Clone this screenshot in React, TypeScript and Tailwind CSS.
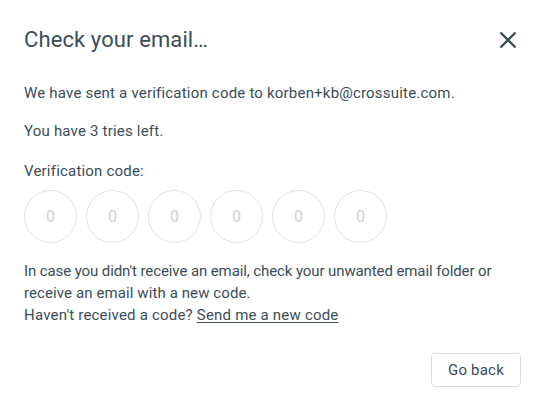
import React from "react";

export default function App() {
  const digits = [0, 1, 2, 3, 4, 5];
  return (
    <div className="w-[545px] h-[409px] bg-white text-[#3b4d56] font-['Roboto',sans-serif] px-6 pt-6 flex flex-col">
      <div className="flex items-center justify-between h-8">
        <h1 className="text-[22px] leading-8 font-normal tracking-[0.1px]">Check your email…</h1>
        <button className="w-6 h-6 flex items-center justify-center mr-[1px]" aria-label="Close">
          <svg width="18" height="18" viewBox="0 0 18 18" fill="none" stroke="#3b4d56" strokeWidth="2.3" strokeLinecap="butt">
            <path d="M1.5 1.5 L16.5 16.5 M16.5 1.5 L1.5 16.5" />
          </svg>
        </button>
      </div>
      <p className="mt-[26px] text-[15px] leading-[22px] tracking-[0.2px]">
        We have sent a verification code to korben+kb@crossuite.com.
      </p>
      <p className="mt-4 text-[15px] leading-[22px] tracking-[0.2px]">You have 3 tries left.</p>
      <p className="mt-[18px] text-[15px] leading-[22px] tracking-[0.2px]">Verification code:</p>
      <div className="mt-2 flex gap-[9px]">
        {digits.map((d) => (
          <div
            key={d}
            className="w-[53px] h-[53px] rounded-full border border-[#e0e0e0] flex items-center justify-center text-[16px] text-[#cfcfcf]"
          >
            0
          </div>
        ))}
      </div>
      <div className="mt-[17px] text-[15px] leading-[22px]">
        <p className="tracking-[-0.1px]">In case you didn't receive an email, check your unwanted email folder or</p>
        <p className="tracking-[0.1px]">receive an email with a new code.</p>
        <p className="tracking-[0.2px]">
          Haven't received a code? <span className="underline underline-offset-2">Send me a new code</span>
        </p>
      </div>
      <div className="mt-[27px] flex justify-end">
        <button className="h-[34px] w-[90px] border border-[#dcdcdc] rounded-[4px] text-[15px] tracking-[0.2px] text-[#3b4d56] bg-white">
          Go back
        </button>
      </div>
    </div>
  );
}
